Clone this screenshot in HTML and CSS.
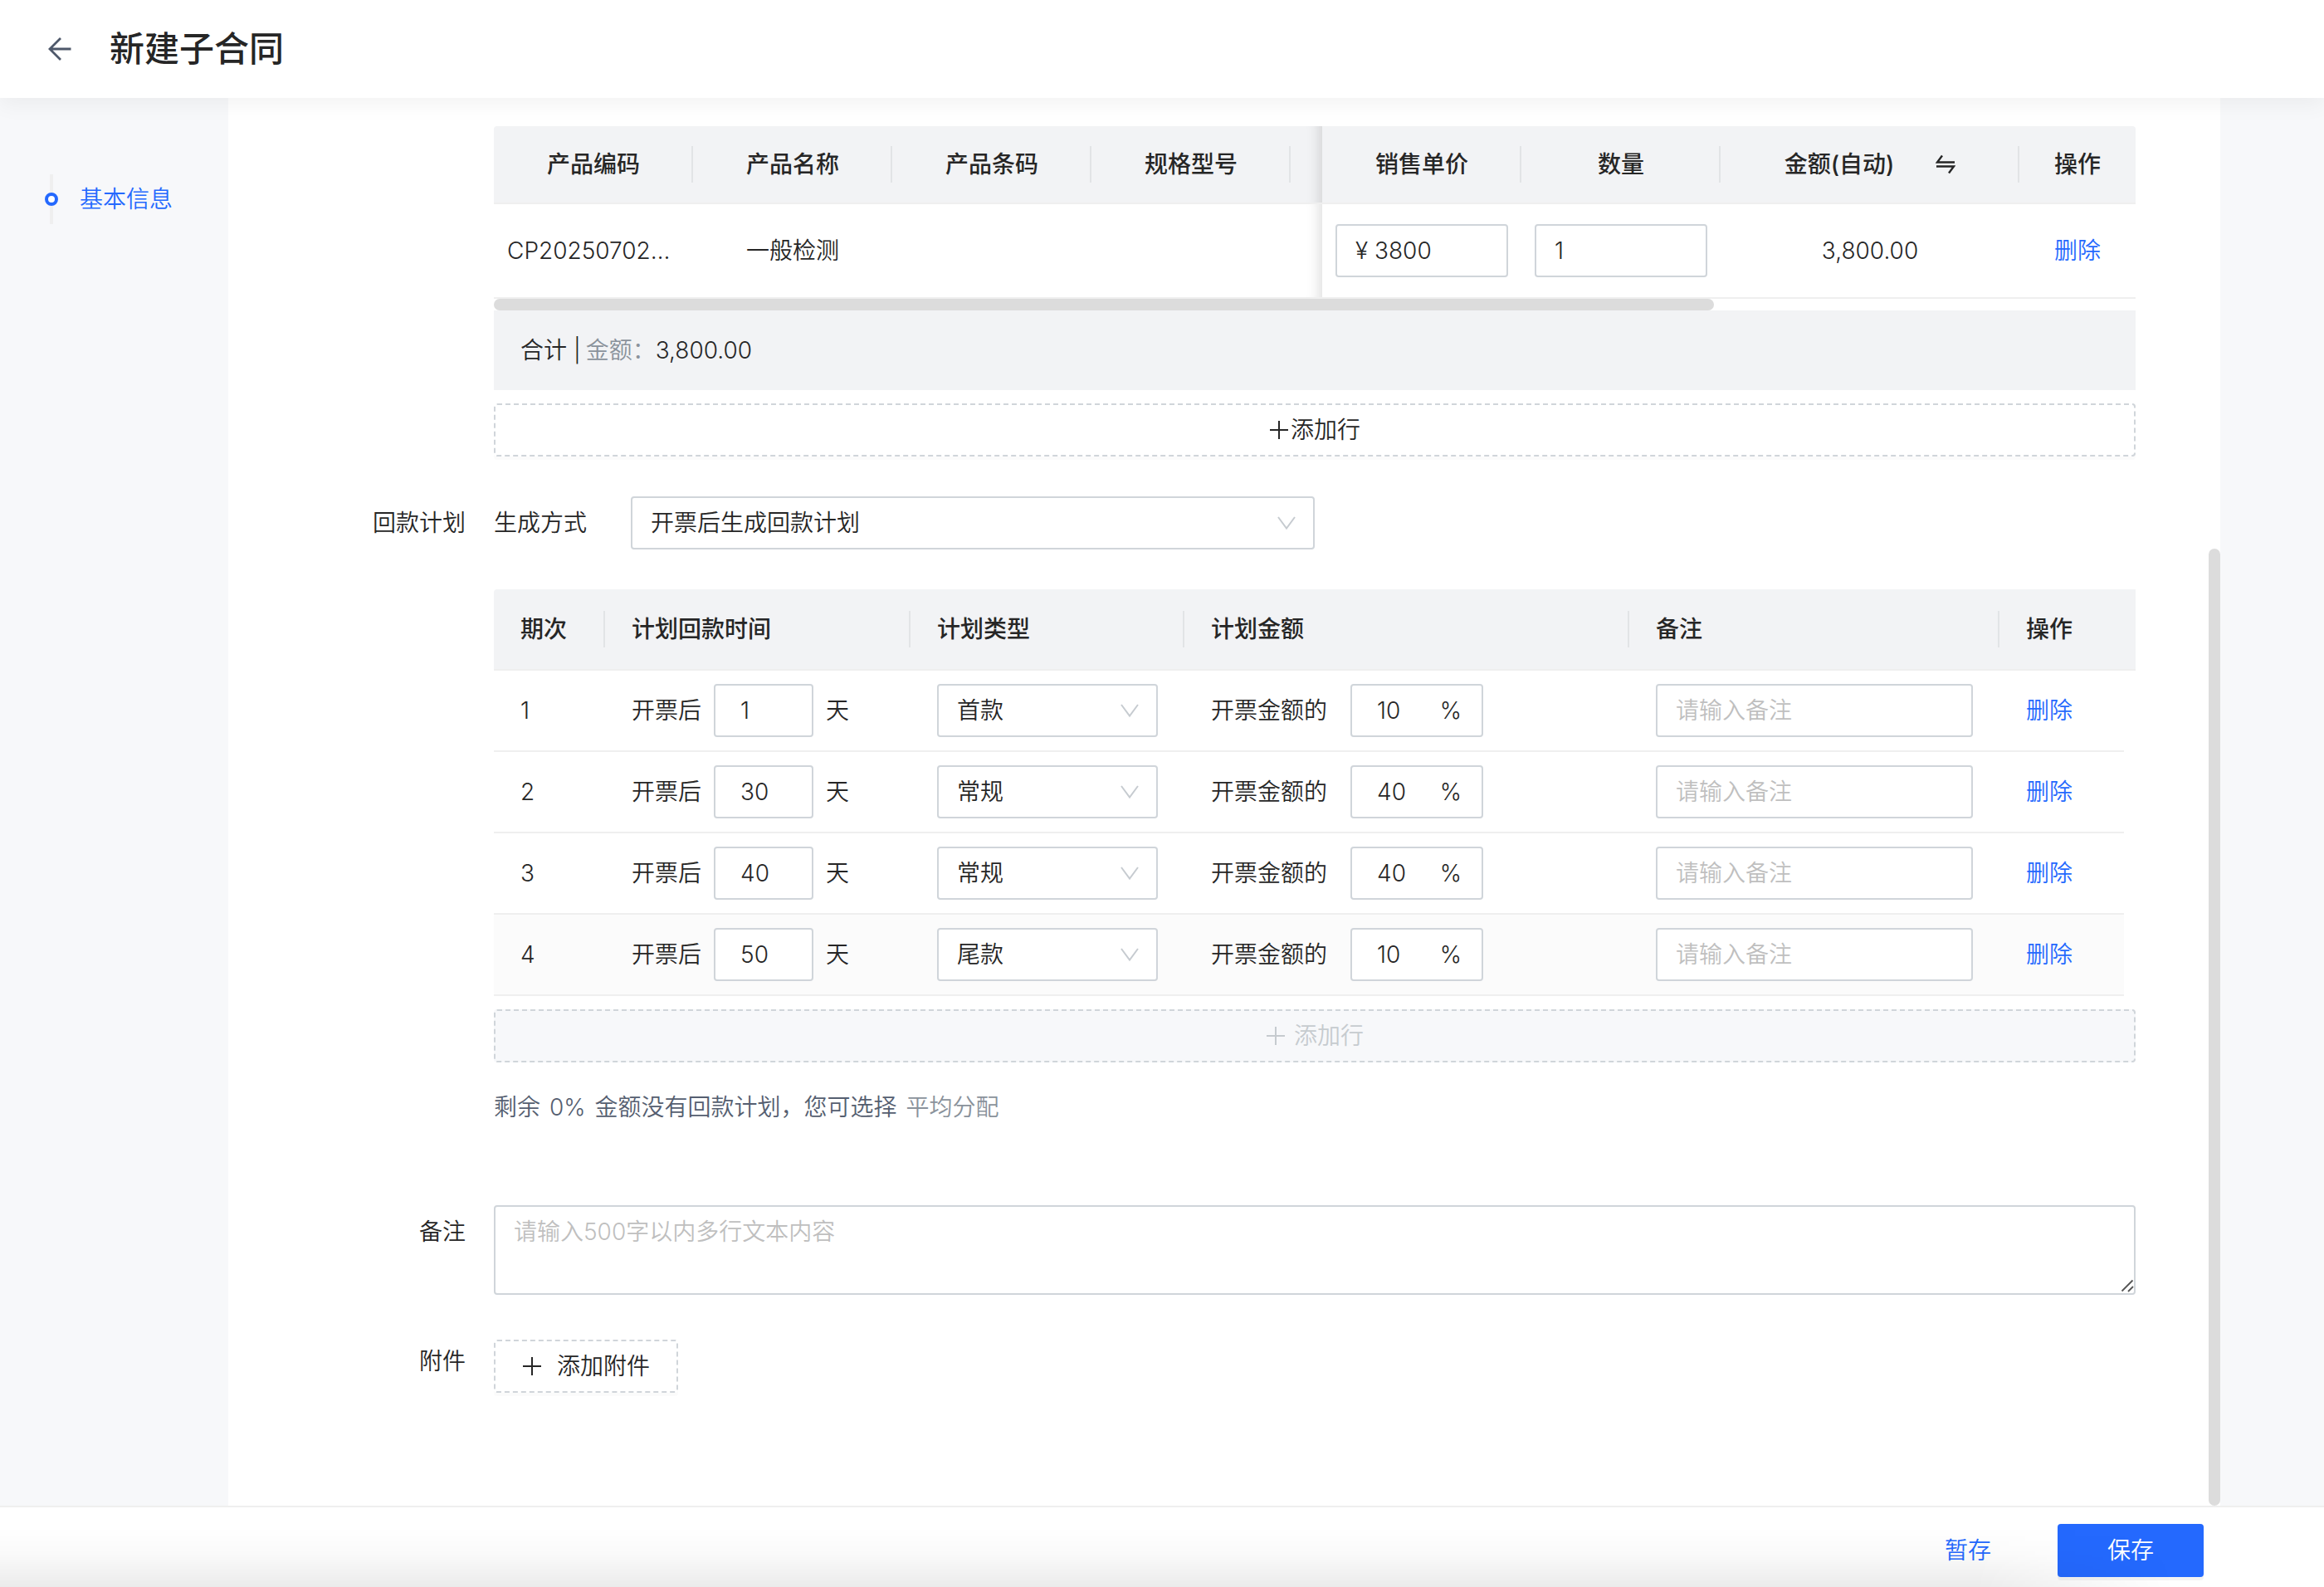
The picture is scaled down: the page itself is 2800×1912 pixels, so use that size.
FILE: index.html
```html
<!DOCTYPE html>
<html lang="zh-CN">
<head>
<meta charset="utf-8">
<title>新建子合同</title>
<link rel="stylesheet" href="styles.css">
</head>
<body>
<svg class="sprite" aria-hidden="true">
  <symbol id="chevron" viewBox="0 0 24 24"><path d="M2 5 12 18.500 22 5" fill="none" stroke="currentColor" stroke-width="2"/></symbol>
  <symbol id="plus" viewBox="0 0 24 24"><path d="M12 1v22M1 12h22" fill="none" stroke="currentColor" stroke-width="2"/></symbol>
</svg>

<header class="topbar">
  <button class="back" type="button" aria-label="返回">
    <svg viewBox="0 0 28 28"><path d="M27.500 14H2.500M15 1 2 14l13 13" fill="none" stroke="currentColor" stroke-width="2.800"/></svg>
  </button>
  <h1 class="title">新建子合同</h1>
</header>

<div class="workspace">
  <nav class="anchors">
    <a class="anchor" href="#basic"><span class="anchor-dot"></span><span>基本信息</span></a>
  </nav>

  <main class="sheet" id="basic">
    <form class="form" id="contract">
      <div class="row">
        <div class="label"></div>
        <div class="content">
          <table class="table products">
            <colgroup><col class="w-240"><col class="w-240"><col class="w-240"><col class="w-240"><col><col class="w-240"><col class="w-240"><col class="w-360"><col class="w-140"></colgroup>
            <thead>
              <tr>
                <th>产品编码</th><th>产品名称</th><th>产品条码</th><th>规格型号</th><th class="under"></th>
                <th>销售单价</th><th>数量</th>
                <th><span class="amount-head">金额(自动)<svg class="swap" viewBox="0 0 24 24"><path d="M8 1.500 2 9.500H23M1 14.500H22L16 22.500" fill="none" stroke="currentColor" stroke-width="2.400"/></svg></span></th>
                <th class="last">操作</th>
              </tr>
            </thead>
            <tbody>
              <tr>
                <td class="clip">CP20250702001</td><td>一般检测</td><td></td><td></td><td class="under"></td>
                <td><input class="input" type="text" value="¥ 3800" aria-label="销售单价"></td>
                <td><input class="input" type="text" value="1" aria-label="数量"></td>
                <td>3,800.00</td>
                <td><a class="link" href="#delete">删除</a></td>
              </tr>
            </tbody>
          </table>
          <div class="hscroll"><div class="hscroll-thumb"></div></div>
          <div class="summary"><span>合计 |</span><span><span class="muted">金额：</span>3,800.00</span></div>
          <button class="dashed add-row tight" type="button"><svg class="icon"><use href="#plus"/></svg>添加行</button>
        </div>
      </div>

      <div class="row">
        <div class="label">回款计划</div>
        <div class="content">
          <div class="mode">
            <label for="mode">生成方式</label>
            <span class="select-box mode-select">
              <select class="select" id="mode"><option>开票后生成回款计划</option></select>
              <svg class="chevron"><use href="#chevron"/></svg>
            </span>
          </div>
          <table class="table plans">
            <colgroup><col class="w-134"><col class="w-368"><col class="w-330"><col><col class="w-446"><col class="w-150"><col class="w-14"></colgroup>
            <thead>
              <tr><th>期次</th><th>计划回款时间</th><th>计划类型</th><th>计划金额</th><th>备注</th><th class="last">操作</th><th class="last"></th></tr>
            </thead>
            <tbody>
              <tr>
                <td>1</td>
                <td><span class="inline">开票后<input class="input days" type="text" value="1" aria-label="天数">天</span></td>
                <td><span class="select-box"><select class="select" aria-label="计划类型"><option>首款</option></select><svg class="chevron"><use href="#chevron"/></svg></span></td>
                <td><span class="inline wide">开票金额的<span class="percent"><input type="text" value="10" aria-label="比例">%</span></span></td>
                <td><input class="input" type="text" placeholder="请输入备注" aria-label="备注"></td>
                <td><a class="link" href="#delete">删除</a></td>
              </tr>
              <tr>
                <td>2</td>
                <td><span class="inline">开票后<input class="input days" type="text" value="30" aria-label="天数">天</span></td>
                <td><span class="select-box"><select class="select" aria-label="计划类型"><option>常规</option></select><svg class="chevron"><use href="#chevron"/></svg></span></td>
                <td><span class="inline wide">开票金额的<span class="percent"><input type="text" value="40" aria-label="比例">%</span></span></td>
                <td><input class="input" type="text" placeholder="请输入备注" aria-label="备注"></td>
                <td><a class="link" href="#delete">删除</a></td>
              </tr>
              <tr>
                <td>3</td>
                <td><span class="inline">开票后<input class="input days" type="text" value="40" aria-label="天数">天</span></td>
                <td><span class="select-box"><select class="select" aria-label="计划类型"><option>常规</option></select><svg class="chevron"><use href="#chevron"/></svg></span></td>
                <td><span class="inline wide">开票金额的<span class="percent"><input type="text" value="40" aria-label="比例">%</span></span></td>
                <td><input class="input" type="text" placeholder="请输入备注" aria-label="备注"></td>
                <td><a class="link" href="#delete">删除</a></td>
              </tr>
              <tr class="hover">
                <td>4</td>
                <td><span class="inline">开票后<input class="input days" type="text" value="50" aria-label="天数">天</span></td>
                <td><span class="select-box"><select class="select" aria-label="计划类型"><option>尾款</option></select><svg class="chevron"><use href="#chevron"/></svg></span></td>
                <td><span class="inline wide">开票金额的<span class="percent"><input type="text" value="10" aria-label="比例">%</span></span></td>
                <td><input class="input" type="text" placeholder="请输入备注" aria-label="备注"></td>
                <td><a class="link" href="#delete">删除</a></td>
              </tr>
            </tbody>
          </table>
          <button class="dashed add-row" type="button" disabled><svg class="icon"><use href="#plus"/></svg>添加行</button>
          <p class="hint"><span>剩余</span><span>0%</span><span>金额没有回款计划，您可选择</span><a class="muted" href="#average">平均分配</a></p>
        </div>
      </div>

      <div class="row remark">
        <label class="label" for="remark">备注</label>
        <div class="content">
          <div class="textarea-box">
            <textarea class="textarea" id="remark" placeholder="请输入500字以内多行文本内容"></textarea>
            <svg class="grip" viewBox="0 0 16 16"><path d="M1.500 14.500 14.500 1.500M9 15l6-6" fill="none" stroke="#555" stroke-width="1.800"/></svg>
          </div>
        </div>
      </div>

      <div class="row">
        <div class="label">附件</div>
        <div class="content upload">
          <button class="dashed attach" type="button"><svg class="icon"><use href="#plus"/></svg>添加附件</button>
        </div>
      </div>
    </form>
    <div class="vscroll-thumb"></div>
  </main>
</div>

<footer class="actions">
  <button class="draft" type="button">暂存</button>
  <button class="save" type="submit" form="contract">保存</button>
</footer>
</body>
</html>
```
FILE: styles.css
```css
* { box-sizing: border-box; }

body {
  margin: 0;
  height: 100vh;
  display: flex;
  flex-direction: column;
  overflow: hidden;
  background: #fff;
  color: #262626;
  font: 350 28px/44px Inter, "Noto Sans CJK SC", sans-serif;
}

button, input, select, textarea { font: inherit; color: inherit; margin: 0; }
button { cursor: pointer; }
a { text-decoration: none; }
.sprite { display: none; }

/* Top bar */
.topbar {
  position: relative;
  z-index: 2;
  flex: none;
  display: flex;
  align-items: center;
  gap: 46px;
  height: 118px;
  padding-left: 58px;
  background: #fff;
  box-shadow: 0 8px 24px rgba(0, 0, 0, .05);
}
.back { width: 28px; height: 28px; padding: 0; border: 0; background: none; color: #4e586a; }
.back svg { display: block; width: 28px; height: 28px; }
.title { margin: 0; font-size: 42px; line-height: 60px; font-weight: 500; }

/* Page body */
.workspace { flex: 1; min-height: 0; display: flex; background: #f7f8fa; padding-right: 125px; }
.anchors { flex: none; width: 275px; padding: 92px 0 0 54px; }
.anchor {
  display: flex;
  align-items: center;
  gap: 26px;
  height: 60px;
  color: #2469fe;
  background: linear-gradient(#efefef, #efefef) 6px 0 / 4px 60px no-repeat;
}
.anchor-dot { width: 16px; height: 16px; border: 4px solid #2469fe; border-radius: 50%; background: #fff; }

.sheet { position: relative; flex: 1; min-width: 0; background: #fff; }
.form { display: flex; flex-direction: column; gap: 48px; padding: 34px 102px 0 0; }
.vscroll-thumb { position: absolute; right: 0; bottom: 0; width: 14px; height: 68%; border-radius: 7px; background: #dcdcdc; }

.row { display: flex; gap: 34px; }
.label { flex: none; width: 286px; text-align: right; line-height: 64px; }
.content { flex: 1; min-width: 0; }

/* Tables */
.table { width: 100%; table-layout: fixed; border-collapse: separate; border-spacing: 0; }
.table th {
  padding: 0;
  font-weight: 500;
  border-bottom: 2px solid #efefef;
  background: linear-gradient(#e2e4e6, #e2e4e6) right center / 2px 44px no-repeat, #f2f3f5;
}
.table th.last { background: #f2f3f5; }
.table td { border-bottom: 2px solid #efefef; }
.table th:first-child { border-top-left-radius: 4px; }
.products th:last-child { border-top-right-radius: 4px; }
.w-14 { width: 14px; }
.w-134 { width: 134px; }
.w-140 { width: 140px; }
.w-150 { width: 150px; }
.w-240 { width: 240px; }
.w-330 { width: 330px; }
.w-360 { width: 360px; }
.w-368 { width: 368px; }
.w-446 { width: 446px; }

.products th { height: 94px; text-align: center; }
.products td { height: 114px; padding: 0 16px; text-align: center; }
.products .under { padding: 0; box-shadow: inset -20px 0 16px -16px rgba(0, 0, 0, .13); }
.products th.under { background: #f2f3f5; }
.clip { overflow: hidden; white-space: nowrap; text-overflow: ellipsis; }
.amount-head { display: inline-flex; align-items: center; gap: 50px; }
.swap { width: 24px; height: 24px; }

.plans th { height: 98px; padding: 0 32px; text-align: left; }
.plans th.last:last-child { padding: 0; }
.plans td { height: 98px; padding: 0 32px; }
.hover td { background: #fbfbfb; }

.link { color: #2469fe; }
.muted { color: #8a929b; }

/* Fields */
.input, .select, .percent, .textarea {
  width: 100%;
  height: 64px;
  padding: 0 22px;
  border: 2px solid #d0d5da;
  border-radius: 4px;
  background: #fff;
  outline: none;
}
.input, .select { display: block; }
.input::placeholder, .textarea::placeholder { color: #bfbfbf; opacity: 1; }
.inline { display: flex; align-items: center; gap: 15px; white-space: nowrap; }
.inline.wide { gap: 28px; }
.days { width: 120px; padding: 0 30px; }
.percent { display: flex; align-items: center; justify-content: space-between; width: 160px; padding: 0 24px 0 30px; }
.percent input { width: 60px; padding: 0; border: 0; background: none; outline: none; }
.select-box { position: relative; display: block; }
.select { appearance: none; }
.chevron { position: absolute; right: 22px; top: 20px; width: 24px; height: 24px; color: #c6cbd0; pointer-events: none; }

/* Product list footer */
.hscroll { height: 14px; }
.hscroll-thumb { width: 74.300%; height: 14px; border-radius: 7px; background: #dcdcdc; }
.summary { display: flex; gap: 6px; align-items: center; height: 96px; padding: 0 32px; background: #f2f3f5; }

.dashed {
  display: flex;
  align-items: center;
  justify-content: center;
  gap: 10px;
  height: 64px;
  border: 2px dashed #d0d5da;
  border-radius: 4px;
  background: #fff;
  box-shadow: 0 4px 0 rgba(0, 0, 0, .016);
}
.dashed:disabled { background: #f7f8fa; color: #c6cbcf; box-shadow: none; }
.add-row { width: 100%; margin-top: 16px; }
.tight { gap: 2px; }
.icon { width: 24px; height: 24px; }

.mode { display: flex; align-items: center; gap: 53px; margin-bottom: 48px; }
.mode-select { width: 824px; }

.hint { display: flex; gap: 11px; margin: 32px 0 0; color: #555e70; }
.remark { margin-top: 48px; }
.textarea-box { position: relative; }
.textarea { display: block; height: 108px; padding: 8px 22px; resize: none; }
.grip { position: absolute; right: 2px; bottom: 3px; width: 16px; height: 16px; }
.upload { padding-top: 6px; }
.attach { width: 222px; gap: 18px; }

/* Bottom bar */
.actions {
  position: relative;
  z-index: 2;
  flex: none;
  display: flex;
  align-items: center;
  justify-content: flex-end;
  gap: 48px;
  height: 98px;
  padding: 8px 145px 0 0;
  border-top: 2px solid #efefef;
  background: #fff;
}
.actions::after {
  content: "";
  position: absolute;
  left: 0;
  right: 180px;
  bottom: 0;
  height: 72px;
  background: linear-gradient(rgba(0, 0, 0, 0), rgba(0, 0, 0, .02) 45%, rgba(0, 0, 0, .08));
  mask-image: linear-gradient(to left, transparent, #000 240px);
  pointer-events: none;
}
.draft { height: 64px; padding: 0 32px; border: 0; background: none; color: #2469fe; }
.save {
  width: 176px;
  height: 64px;
  border: 0;
  border-radius: 4px;
  background: #2469fe;
  color: #fff;
  box-shadow: 0 4px 0 rgba(0, 0, 0, .045);
}
```
